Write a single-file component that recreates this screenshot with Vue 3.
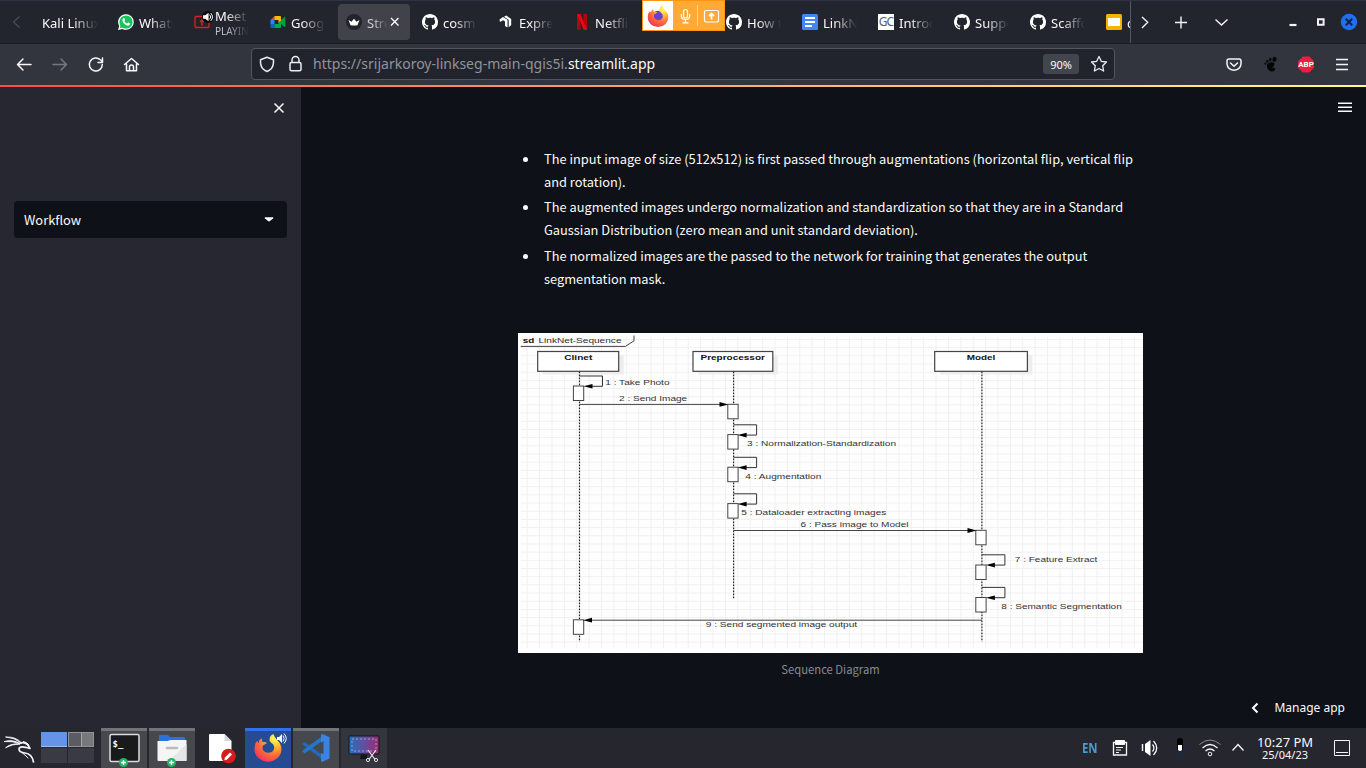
<script setup>
const tabs = [
  { title: 'Kali Linux', icon: '' },
  { title: 'WhatsApp', icon: 'whatsapp' },
  { title: 'Meet –', sub: 'PLAYING', icon: 'share' },
  { title: 'Google', icon: 'meet' },
  { title: 'Strea', icon: 'crown', active: true },
  { title: 'cosmo', icon: 'github' },
  { title: 'Expres', icon: 'express' },
  { title: 'Netflix', icon: 'netflix' },
  { title: '', icon: '' },
  { title: 'How to', icon: 'github' },
  { title: 'LinkNet', icon: 'docs' },
  { title: 'Introd', icon: 'gc' },
  { title: 'Suppo', icon: 'github' },
  { title: 'Scaffo', icon: 'github' },
  { title: 'content', icon: 'slides' }
]
const bullets = [
  ['The input image of size (512x512) is first passed through augmentations (horizontal flip, vertical flip', 'and rotation).'],
  ['The augmented images undergo normalization and standardization so that they are in a Standard', 'Gaussian Distribution (zero mean and unit standard deviation).'],
  ['The normalized images are the passed to the network for training that generates the output', 'segmentation mask.']
]
const actors = [
  { x: 19.7, w: 81, name: 'Clinet', tx: 46.3, tw: 28, life: 61.5, end: 308.7 },
  { x: 175, w: 79.8, name: 'Preprocessor', tx: 182.5, tw: 64.4, life: 215.6, end: 266.3 },
  { x: 416.7, w: 92.7, name: 'Model', tx: 448.7, tw: 28.6, life: 463.9, end: 308.7 }
]
const boxes = [
  [55.4, 53], [55.4, 286.8], [209.8, 71.3], [209.8, 101.6], [209.8, 134.2], [209.8, 170.6],
  [457.8, 197.3], [457.8, 232], [457.8, 264.5]
]
const loops = [[61.5, 43], [215.6, 91.8], [215.6, 124.3], [215.6, 160.8], [463.9, 221.8], [463.9, 254.4]]
const labels = [
  ['1 : Take Photo', 87.3, 52, 64.2],
  ['2 : Send Image', 101, 68.4, 68.2],
  ['3 : Normalization-Standardization', 229, 113, 149],
  ['4 : Augmentation', 227.3, 145.5, 76],
  ['5 : Dataloader extracting images', 223.3, 182.4, 145],
  ['6 : Pass image to Model', 282.5, 194.4, 108],
  ['7 : Feature Extract', 496.8, 228.5, 82.5],
  ['8 : Semantic Segmentation', 483.3, 275.9, 120.5],
  ['9 : Send segmented image output', 187.8, 294.4, 151.3]
]
</script>

<template>
  <div class="screen">
    <header class="tabbar">
      <svg class="scroll-left" width="34" height="20" viewBox="0 0 34 20"><path d="M19.500 4.500 13.500 10l6 5.500" /></svg>
      <div class="tabs">
        <div v-for="(t, i) in tabs" :key="i" class="tab" :class="{ active: t.active }">
          <svg v-if="t.icon === 'whatsapp'" class="fav" viewBox="0 0 16 16">
            <path d="M8 .2a7.800 7.800 0 0 1 0 15.600 8 8 0 0 1-3.700-.9L0 16l1.200-4.100A7.800 7.800 0 0 1 8 .2" fill="#fff" />
            <circle cx="8" cy="8" r="6.600" fill="#19c25a" /><path d="m1.800 14.300.9-3.400 2.500 2.400z" fill="#19c25a" />
            <path d="M5.300 4.200c.6-.4 1.100-.2 1.300.4l.5 1.200c.1.400-.5.900-.7 1.200.5 1.200 1.500 2 2.700 2.500.5-.3.800-1.100 1.300-.9l1.400.7c.6.3 0 1.700-.6 2-1.800.8-4-.6-5.200-1.900C4.800 8 3.600 5.700 5.300 4.200" fill="#fff" />
          </svg>
          <span v-else-if="t.icon === 'share'" class="fav share">
            <svg width="16" height="16" viewBox="0 0 16 16" fill="none" stroke="#d8231d"><rect x="1" y="2.500" width="14" height="11" rx="1" stroke-width="1.300" /><path d="M8 11.500V6M6 8l2-2 2 2" stroke-width="1.500" /></svg>
            <svg class="sound" width="12" height="12" viewBox="0 0 11 11"><circle cx="5.500" cy="5.500" r="5.500" fill="#0b0b0e" /><path d="M1 4h2l3-2.500v8L3 7H1z" fill="#fff" /><path d="M7 3.300q2 2.200 0 4.400M8 1.900q3.200 3.600 0 7.200" fill="none" stroke="#fff" stroke-width=".9" /></svg>
          </span>
          <svg v-else-if="t.icon === 'meet'" class="fav" viewBox="0 0 16 16">
            <path d="M.5 6 4.500 2v4z" fill="#ea4335" /><path d="M4.500 2H10q1 0 1 1v4L8.500 9V6h-4z" fill="#fbbc04" />
            <path d="M.5 6h4v4h-4z" fill="#2684fc" /><path d="M.5 10h4v4h-3q-1 0-1-1z" fill="#0066da" />
            <path d="M4.500 10h4V8L11 7v6q0 1-1 1H4.500z" fill="#00ac47" /><path d="m11 6 3.500-3q.8-.4.800.4v9.200q0 .8-.8.4L11 10z" fill="#00a043" />
          </svg>
          <svg v-else-if="t.icon === 'crown'" class="fav" viewBox="0 0 16 16"><circle cx="8" cy="8" r="8" fill="#23232d" /><path d="m2.500 6 3 1.800L8 4.800l2.500 3 3-1.800-2 5.200q-3.500.8-7 0z" fill="#fff" /></svg>
          <svg v-else-if="t.icon === 'github'" class="fav" viewBox="0 0 16 16"><path fill="#fff" d="M8 0C3.580 0 0 3.580 0 8c0 3.540 2.290 6.530 5.470 7.590.4.070.55-.17.55-.38 0-.19-.01-.82-.01-1.490-2.010.37-2.530-.49-2.690-.94-.09-.23-.48-.94-.82-1.130-.28-.15-.68-.52-.01-.53.63-.01 1.080.58 1.230.82.720 1.210 1.870.87 2.330.66.070-.52.28-.87.51-1.070-1.780-.2-3.640-.89-3.640-3.950 0-.87.31-1.590.82-2.150-.08-.2-.36-1.020.08-2.120 0 0 .67-.21 2.200.82.640-.18 1.320-.27 2-.27s1.360.09 2 .27c1.530-1.040 2.200-.82 2.200-.82.440 1.100.16 1.920.08 2.120.51.56.82 1.270.82 2.150 0 3.070-1.870 3.750-3.650 3.950.29.25.54.73.54 1.480 0 1.070-.01 1.930-.01 2.200 0 .21.15.46.55.38A8.010 8.010 0 0 0 16 8c0-4.420-3.580-8-8-8" /></svg>
          <svg v-else-if="t.icon === 'express'" class="fav" viewBox="0 0 16 16" fill="#fff"><path d="M1.500 5.500 5 3l4.500 2.800v7.700L7 12V7.500L5 6.200 2 8z" /><path d="M6 2.800 8.300 1.500 13.200 5v6l-2.500 2.300V5.800z" /></svg>
          <svg v-else-if="t.icon === 'netflix'" class="fav" viewBox="0 0 16 16"><path d="M3 0h3.500v15.600L3 16zM9.500 0H13v16l-3.500-.4z" fill="#b1060f" /><path d="M3 0h3.500L13 16l-3.500-.5z" fill="#e50914" /></svg>
          <svg v-else-if="t.icon === 'docs'" class="fav" viewBox="0 0 16 16"><rect width="16" height="16" rx="1.500" fill="#4285f4" /><path d="M3 4h10M3 8h10M3 12h7" stroke="#fff" stroke-width="2" /></svg>
          <span v-else-if="t.icon === 'gc'" class="fav gc">GC</span>
          <svg v-else-if="t.icon === 'slides'" class="fav" viewBox="0 0 16 16"><rect width="16" height="16" rx="1.500" fill="#f5b400" /><path d="M2 4h12v8H2z" fill="#fff" /></svg>
          <span class="title"><b>{{ t.title }}</b><small v-if="t.sub">{{ t.sub }}</small></span>
          <svg v-if="t.active" class="close" width="10" height="10" viewBox="0 0 10 10"><path d="m1 1 7.500 7.500M8.500 1 1 8.500" /></svg>
        </div>
      </div>
      <div class="tabtools">
        <svg width="236" height="43" viewBox="0 0 236 43" fill="none" stroke="#f4f4f8" stroke-width="1.400">
          <path d="m12 17 5.700 5.300L12 28M45 22.500h12M51 16.500v12M85.500 19.500l6 5.500 6-5.500" />
          <path d="M159.500 25h7" stroke-width="2.200" /><path d="M188 19.200h5.600v5.600H188z" stroke-width="2" />
          <circle cx="219" cy="22" r="8.200" fill="#1f6ff0" stroke="none" /><path d="m215.800 18.800 6.400 6.400m0-6.400-6.400 6.400" stroke="#16213a" stroke-width="2" />
        </svg>
      </div>
    </header>
    <div class="sharing">
      <span class="fx"><svg width="22" height="22" viewBox="0 0 32 32"><use href="#fox" /></svg></span>
      <svg width="51" height="29" viewBox="0 0 51 29" fill="none" stroke="#fff" stroke-width="1.200"><rect x="10.500" y="8.500" width="4" height="8.500" rx="2" /><path d="M8.300 13v1.800q0 3.700 4.200 3.700t4.200-3.700V13M12.500 18.500v3.300M9.500 21.800h6" /><path d="M24.500 4v21" stroke="#ffd28f" stroke-width="1" /><rect x="31.500" y="9.500" width="14" height="11.500" rx="1.500" /><path d="M38.500 18.500V13M36 15l2.500-2.500L41 15" stroke-width="1.800" /></svg>
    </div>

    <div class="toolbar">
      <svg class="nav" width="150" height="41" viewBox="0 0 150 41" fill="none" stroke="#f7f7fa" stroke-width="1.500" stroke-linecap="round" stroke-linejoin="round">
        <path d="M31 20.500H17.500M23 15l-5.500 5.500L23 26" /><path d="M53 20.500h13.500M61 15l5.500 5.500L61 26" stroke="#77787f" />
        <path d="M102.300 20.500a6.500 6.500 0 1 1-2-4.700l2 1.700M102.500 14v4.500H98" /><path d="m124.500 20.500 7-6 7 6M126.500 20v6.700h10V20M129.500 26.500v-3.800q0-1.800 2-1.800t2 1.800v3.800" />
      </svg>
      <div class="url">
        <svg width="61" height="30" viewBox="0 0 61 30" fill="none" stroke="#ececf1" stroke-width="1.500"><path d="m15 8.200 6.500 2.500q.3 6.300-2.600 9.300Q17.300 21.500 15 22.500q-2.300-1-3.900-2.500-2.900-3-2.600-9.300z" stroke-linejoin="round" /><rect x="38" y="13.500" width="11" height="8.300" rx="1.500" /><path d="M40 13.500V11a3.500 3.500 0 0 1 7 0v2.500" /></svg>
        <span class="address">https://srijarkoroy-linkseg-main-qgis5i.<em>streamlit.app</em></span>
        <span class="zoom">90%</span>
        <svg class="star" width="18" height="18" viewBox="0 0 18 18"><path d="m9 1.500 2.300 4.800 5.200.7-3.800 3.700.9 5.300L9 13.500 4.400 16l.9-5.300L1.500 7l5.200-.7z" fill="none" stroke="#ececf1" stroke-width="1.300" stroke-linejoin="round" /></svg>
      </div>
      <div class="ext">
        <svg width="151" height="41" viewBox="0 0 151 41" fill="none" stroke="#f4f4f8" stroke-width="1.500" stroke-linejoin="round">
          <path d="M14 15h10q2 0 2 2v3q-.5 5.500-7 6.300-6.500-.8-7-6.300v-3q0-2 2-2zM15.500 19l3.500 3.200 3.500-3.200" stroke-linecap="round" />
          <g fill="#050507" stroke="none"><ellipse cx="59.500" cy="15.300" rx="2" ry="2.500" transform="rotate(20 59.500 15.300)" /><ellipse cx="55.300" cy="15.500" rx="1.300" ry="1.800" /><ellipse cx="52.400" cy="17.300" rx="1.100" ry="1.400" /><ellipse cx="50.400" cy="19.600" rx=".9" ry="1.200" /><path d="M58.500 18.500c-4-.8-7 1-6.500 4 .3 2 1.700 5 5 5 2.600 0 3.500-1.800 3-3.200-.3-.8-1.700-.7-2.500 0-.4-1.800 4-3.600 1-5.800" /></g>
          <path d="M87.700 12.500h6.600L99 17.200v6.600l-4.700 4.700h-6.600L83 23.800v-6.600z" fill="#ef1c3f" stroke="none" />
          <path d="M121 15.500h12M121 20.500h12M121 25.500h12" />
        </svg>
        <span class="abp">ABP</span>
      </div>
    </div>
    <div class="rainbow"></div>

    <main class="page">
      <aside>
        <svg class="dismiss" width="12" height="12" viewBox="0 0 12 12"><path d="m1.500 1.500 9 9m0-9-9 9" /></svg>
        <div class="select"><span>Workflow</span><svg width="10" height="5" viewBox="0 0 10 5"><path d="M1 .3h8q.7.300.2.900L6 4.100q-1 .8-2 0L.8 1.200Q.3.600 1 .3" fill="#fafafa" /></svg></div>
      </aside>
      <section>
        <svg class="menu" width="14" height="11" viewBox="0 0 14 11"><path d="M0 1.200h14M0 5.200h14M0 9.200h14" stroke="#fafafa" stroke-width="1.500" /></svg>
        <div class="content">
          <ul><li v-for="(b, i) in bullets" :key="i">{{ b[0] }}<br />{{ b[1] }}</li></ul>
          <svg class="diagram" width="625" height="320" viewBox="0 0 625 320">
            <defs>
              <pattern id="grid" x="8.700" y="6" width="12.390" height="8.180" patternUnits="userSpaceOnUse"><path d="M0 .5h12.390M.5 0v8.180" stroke="#f0f0f0" /></pattern>
            </defs>
            <rect width="625" height="320" fill="#fefefe" />
            <rect x="3" y="4" width="622" height="311.500" fill="url(#grid)" />
            <path d="M2.700 13.400h104.600l8.700-5.500V2.500" fill="none" stroke="#444" />
            <g class="label"><text x="4.700" y="9.800" textLength="11.500" lengthAdjust="spacingAndGlyphs" class="strong">sd</text><text x="20.500" y="9.800" textLength="83" lengthAdjust="spacingAndGlyphs">LinkNet-Sequence</text></g>
            <g v-for="a in actors" :key="a.name">
              <rect :x="a.x + 5" y="22" :width="a.w" height="19.500" fill="#ededed" />
              <rect :x="a.x" y="18.500" :width="a.w" height="19.800" class="box" />
              <text :x="a.tx" y="27" :textLength="a.tw" lengthAdjust="spacingAndGlyphs" class="strong">{{ a.name }}</text>
              <line :x1="a.life" :x2="a.life" y1="38.500" :y2="a.end" stroke="#222" stroke-width="1.200" stroke-dasharray="1.700 1.300" />
            </g>
            <rect v-for="(b, i) in boxes" :key="i" :x="b[0]" :y="b[1]" width="10.300" height="14.500" class="box thin" />
            <g v-for="(l, i) in loops" :key="'l' + i">
              <path :d="`M${l[0]} ${l[1]}h23v10.300h-15`" fill="none" stroke="#333" />
              <path :d="`M${l[0] + 4} ${l[1] + 10.300}l9-2.300v4.600z`" />
            </g>
            <path d="M61.500 71.400H204M215.700 197.500H452M464 287.200H74" stroke="#444" />
            <path d="m210.500 71.400-9-2.400v4.800zM458.500 197.500l-9-2.400v4.800zM65 287.200l9-2.400v4.800z" />
            <g class="label"><text v-for="l in labels" :key="l[0]" :x="l[1]" :y="l[2]" :textLength="l[3]" lengthAdjust="spacingAndGlyphs">{{ l[0] }}</text></g>
          </svg>
          <p class="caption">Sequence Diagram</p>
        </div>
        <div class="manage"><svg width="8" height="12" viewBox="0 0 8 12"><path d="M6.500 1.500 2 6l4.500 4.500" /></svg><span>Manage app</span></div>
      </section>
    </main>

    <footer class="taskbar">
      <svg class="kali" width="37" height="40" viewBox="0 0 37 40" fill="none" stroke="#f4f4f6" stroke-linecap="round" stroke-linejoin="round">
        <path d="M6 9q10-.5 15.500 6Q14 9.500 6 9zM4.500 13.500q8-2.500 15.500 2-7.500-2.500-15.500-2zM6 19.500q5-4.500 14-3.500-8 0-14 3.500z" fill="#f4f4f6" stroke-width=".9" />
        <path d="M19.500 15.500q4.500-2 8 1l2.500 4-4.500-1.200q-6.500-1.300-6.500 1.700 0 3.500 6 4 7 .7 8.500 9" stroke-width="1.700" /><path d="M23.500 13.500q3.500.5 5.500 3.500M20 23q6 4.500 8 7" stroke-width="1" />
      </svg>
      <div class="pager"><i class="on"></i><i class="win"><u></u><u></u></i><i></i><i></i></div>
      <div class="tasks">
        <div class="task run"><svg viewBox="0 0 46 40"><rect x="9" y="6.500" width="29" height="27" rx="1.500" fill="#181a1c" stroke="#dcdcdc" stroke-width="1.500" /><circle cx="22.500" cy="34.500" r="4.500" fill="#26b466" /><path d="M20 34.500h5M22.500 32v5" stroke="#fff" stroke-width="1.300" /></svg><span class="prompt">$_</span></div>
        <div class="task run"><svg viewBox="0 0 46 40"><path d="M10 17V8q0-1 1-1h8l2 2h14q1 0 1 1v7z" fill="#2b72df" /><path d="M8.500 13h10l3-1H37.500v20q0 1-1 1h-27q-1 0-1-1z" fill="#f5f5f6" /><path d="m20 33 17.500-17v17z" fill="#e5e5e7" /><path d="M18 20h10" stroke="#bcbcc0" stroke-width="2.600" stroke-linecap="round" /><circle cx="22.500" cy="34.500" r="4.500" fill="#26b466" /><path d="M20 34.500h5M22.500 32v5" stroke="#fff" stroke-width="1.300" /></svg></div>
        <div class="task"><svg viewBox="0 0 46 40"><path d="M13 6h14.500l7 7v20H13q-1 0-1-1V7q0-1 1-1" fill="#fff" /><path d="m27.500 6 7 7h-7z" fill="#d7d7da" /><circle cx="31.500" cy="28" r="7.300" fill="#d51c1c" /><path d="m28.500 31 5.500-5.500" stroke="#fff" stroke-width="2.800" /><path d="m27.300 32.300.6-2.400 1.700 1.700z" fill="#fff" /></svg></div>
        <div class="task focus"><svg viewBox="0 0 46 40">
          <defs>
            <radialGradient id="fg" cx=".76" cy=".14" r="1"><stop offset=".1" stop-color="#fff14e" /><stop offset=".35" stop-color="#ffb331" /><stop offset=".6" stop-color="#ff7139" /><stop offset="1" stop-color="#f02b5f" /></radialGradient>
            <g id="fox"><circle cx="16" cy="17.500" r="9" fill="#6b3fd0" /><path d="M22 1q1 3 4.500 7Q31 12 31 18a15 14 0 0 1-30 0q0-6 3-9l2 2q0-4 3-5l1 4q3-.5 5 1l-3 2q-2 0-2 3 0 5 6 6 6 0 7-5 .3-4-3-6-3-2-2-5 0-3 4-5" fill="url(#fg)" /></g>
          </defs>
          <g transform="translate(8.500 5)scale(.9)"><circle cx="16" cy="17.500" r="8" fill="#254b91" /><path d="M22 1q1 3 4.500 7Q31 12 31 18a15 14 0 0 1-30 0q0-6 3-9l2 2q0-4 3-5l1 4q3-.5 5 1l-3 2q-2 0-2 3 0 5 6 6 6 0 7-5 .3-4-3-6-3-2-2-5 0-3 4-5" fill="url(#fg)" /></g>
          <path d="M32 9h2l3-3v9l-3-3h-2z" fill="#fff" /><path d="M38 7.500q2.300 3 0 6M39 5.500q4.500 5 0 10" fill="none" stroke="#fff" /></svg></div>
        <div class="task run"><svg viewBox="0 0 46 40"><path d="m9 16 2.500-2L32 29v4.500z" fill="#1f6cbd" /><path d="m9 23 2.500 2.500L32 11V6z" fill="#2475cb" /><path d="m29 6 7.500 3v21.500L29 34l-1-1V7z" fill="#3b83e3" /><path d="M30.500 13v13.500L21 19.700z" fill="#48494e" /></svg></div>
        <div class="task dim"><svg viewBox="0 0 46 40"><defs><linearGradient id="shot"><stop stop-color="#2470bd" /><stop offset=".55" stop-color="#684c9b" /><stop offset="1" stop-color="#a02a6c" /></linearGradient></defs><path d="M8 8h30v18H8z" fill="url(#shot)" stroke="#17171d" /><path d="M11 11h24v12H11z" fill="none" stroke="#8ba4d8" stroke-dasharray="2 2" /><path d="M20 26.500h6v4.500h-7z" fill="#141419" /><path d="m27 22 7 9.500M35 22l-7 9.500" stroke="#e4e4e6" stroke-width="1.200" /><g fill="none" stroke="#e4e4e6"><circle cx="27" cy="32" r="1.600" /><circle cx="35" cy="32" r="1.600" /></g></svg></div>
      </div>
      <div class="tray">
        <span class="lang">EN</span>
        <svg width="147" height="40" viewBox="0 0 147 40" fill="none" stroke="#f6f6f8">
          <path d="M13.500 14.500h13v12.500h-13z" stroke-width="1.300" /><path d="M15.500 12.500h9v4h-9z" fill="#fff" /><path d="M16 19.500h7M16 22h5M16 24.500h3" stroke-width="1.100" />
          <path d="M42.500 16v7" stroke-width="1.500" /><path d="m45 16 5.500-4v16L45 24z" fill="#fff" stroke="none" /><path d="M52.500 16.500q2.800 3.500 0 7M53.500 13q6.500 7 0 14" stroke-width="1.300" />
          <rect x="77" y="10" width="6" height="13" rx="3" fill="#030303" stroke="none" /><path d="M78 17h4v5q-2 2-4 0z" fill="#fff" stroke="none" /><path d="M75.500 20v1.500q0 4 4.500 4t4.500-4V20M80 25.500v3M77 28.500h6" stroke="#182957" />
          <path d="M99.500 16.500q10.500-9 21 0" stroke="#8c8d92" /><path d="M102.500 20q7.500-7 15 0M105.500 23q4.500-4 9 0" stroke-width="1.200" /><circle cx="110" cy="26" r="1.800" />
          <path d="m132.500 22.500 5.500-6 5.500 6" stroke-width="1.300" />
        </svg>
        <div class="clock"><span>10:27 PM</span><small>25/04/23</small></div>
        <svg class="desk" width="16" height="16" viewBox="0 0 16 16" fill="none" stroke="#f6f6f8"><path d="M.5.500h15v15H.5zM2 12.500h12" /></svg>
      </div>
    </footer>
  </div>
</template>

<style>
html, body { margin: 0; background: #0e1117; overflow: hidden; }
</style>
<style scoped>
.screen { width: 1366px; height: 768px; display: flex; flex-direction: column; position: relative; overflow: hidden; font-family: "Noto Sans", sans-serif; color: #fafafa; }
svg { display: block; flex: none; }
.tabbar { height: 44px; flex: none; box-sizing: border-box; display: flex; background: #23252e; border-top: 1px solid #2f3247; border-bottom: 1px solid #191a22; }
.scroll-left { margin-top: 11px; fill: none; stroke: #4a4c55; stroke-width: 1.200; }
.tabs { width: 1096px; flex: none; display: flex; gap: 4px; overflow: hidden; padding-top: 3px; box-sizing: border-box; }
.tab { width: 72px; height: 36px; flex: none; box-sizing: border-box; padding: 0 8px; display: flex; align-items: center; gap: 5px; border-radius: 4px; }
.tab.active { background: #42424b; }
.fav { width: 16px; height: 16px; flex: none; position: relative; }
.sound { position: absolute; left: 8px; top: -3px; }
.gc { background: #fff; color: #52616b; font-size: 12px; line-height: 16px; text-align: center; letter-spacing: -.8px; }
.title { flex: 1; min-width: 0; overflow: hidden; white-space: nowrap; display: flex; flex-direction: column; padding-top: 2px; -webkit-mask-image: linear-gradient(90deg, #000 30%, transparent 97%); mask-image: linear-gradient(90deg, #000 30%, transparent 97%); }
.title b { font-weight: 400; font-size: 13px; line-height: 17px; }
.title small { font-size: 10px; line-height: 13px; color: #c4c4ca; }
.tab:first-child .title { -webkit-mask-image: linear-gradient(90deg, #000 55%, transparent); mask-image: linear-gradient(90deg, #000 55%, transparent); }
.tab.active .title { margin-right: -3px; color: #d0d0d4; }
.close { fill: none; stroke: #fff; stroke-width: 1.300; margin-right: 2px; }
.tabtools { border-left: 1px solid #565861; width: 235px; }
.tabtools svg { margin: -1px 0 0 -1px; }
.sharing { position: absolute; left: 642px; top: 0; width: 83px; height: 31px; box-sizing: border-box; border: 1px solid #ff9410; background: #ffaa35; display: flex; }
.fx { width: 30px; background: #fff; display: grid; place-items: center; }
.toolbar { height: 41px; flex: none; display: flex; align-items: flex-start; background: #33353e; position: relative; }
.nav { margin-right: 101px; }
.url { width: 864px; height: 32px; margin-top: 4px; box-sizing: border-box; border: 1px solid #54565f; border-radius: 4px; background: #22242d; display: flex; align-items: center; }
.address { font-size: 14.030px; color: #92939a; flex: 1; white-space: nowrap; margin-top: -2px; }
.address em { font-style: normal; color: #fafafa; }
.zoom { width: 36px; height: 20px; border-radius: 3px; background: #43454d; font-size: 11px; line-height: 21px; text-align: center; margin-right: 11px; }
.star { margin-right: 6px; }
.ext { margin-left: 100px; position: relative; }
.abp { position: absolute; left: 83px; top: 14px; width: 16px; text-align: center; font: bold 8px/14px "Roboto", sans-serif; }
.rainbow { height: 2px; flex: none; background: linear-gradient(90deg, #ff4b4b, #ffb06b 55%, #fffd80); }
.page { flex: 1; display: flex; background: #0e1117; min-height: 0; font-family: "Noto Sans CJK SC", sans-serif; }
aside { width: 301px; flex: none; background: #262730; box-sizing: border-box; padding: 15px 14px 0; display: flex; flex-direction: column; }
.dismiss { align-self: flex-end; margin-right: 2px; fill: none; stroke: #fafafa; stroke-width: 1.500; }
.select { margin-top: 87px; height: 37px; border-radius: 4px; background: #0e1117; display: flex; align-items: center; justify-content: space-between; padding: 0 13px 0 10px; font-size: 12.900px; }
section { flex: 1; position: relative; }
.menu { position: absolute; right: 14px; top: 15px; }
.content { width: 625px; margin-left: 217px; padding-top: 60px; }
ul { margin: 0; padding: 0; list-style: none; height: 186px; font-size: 12.840px; line-height: 23px; }
li { padding-left: 26px; margin-bottom: 2.300px; position: relative; white-space: nowrap; }
li::before { content: ""; position: absolute; left: 5px; top: 10px; width: 5px; height: 5px; border-radius: 50%; background: #fafafa; }
.diagram text { font-family: "Liberation Sans", sans-serif; font-size: 7px; fill: #333; }
.diagram .strong { font-weight: bold; fill: #111; }
.box { fill: #fff; stroke: #444; stroke-width: 1.200; }
.thin { stroke-width: 1; }
.caption { margin: 6px 0 0; text-align: center; font-size: 11.250px; line-height: 20px; color: #898a8f; }
.manage { position: absolute; right: 21px; bottom: 10px; display: flex; align-items: center; gap: 15px; font: 12px/20px "Noto Sans", sans-serif; }
.manage path { fill: none; stroke: #fff; stroke-width: 2; }
.taskbar { height: 40px; flex: none; background: #25262e; display: flex; }
.kali { margin-right: 4px; }
.pager { width: 53px; height: 31px; margin: 4px 7px 0 0; display: grid; grid-template-columns: 26px 26px; grid-template-rows: 15px 15px; gap: 1px; }
.pager i { background: #393a43; }
.pager .on { background: #6494e8; border-bottom: 1px solid #9bbcf7; box-sizing: border-box; }
.pager .win { display: flex; box-sizing: border-box; border: 1px solid #929297; }
.win u { flex: 1; background: #5b5b63; }
.win u + u { background: #78777b; border-left: 1px solid #a5a5a9; }
.tasks { display: flex; gap: 2px; }
.task { width: 46px; height: 40px; position: relative; }
.task svg { width: 46px; height: 40px; }
.run { background: #47484e; box-shadow: inset 0 3px #737479; }
.focus { background: #264b91; box-shadow: inset 0 3px #2d73eb; }
.dim { background: #34353d; }
.prompt { position: absolute; left: 11.500px; top: 10px; font: bold 9px/12px "DejaVu Sans Mono", monospace; }
.tray { margin-left: auto; display: flex; align-items: center; padding-right: 16px; }
.lang { width: 17px; margin-right: 1px; color: #4b9bd2; font: bold 13.500px/16px "Noto Sans", sans-serif; transform: scaleX(.84); transform-origin: left; }
.clock { width: 56px; margin-left: 10px; text-align: center; display: flex; flex-direction: column; align-items: center; white-space: nowrap; }
.clock span { font-size: 13px; line-height: 13px; }
.clock small { font-size: 11px; line-height: 11px; }
.desk { margin-left: 21px; }
</style>
